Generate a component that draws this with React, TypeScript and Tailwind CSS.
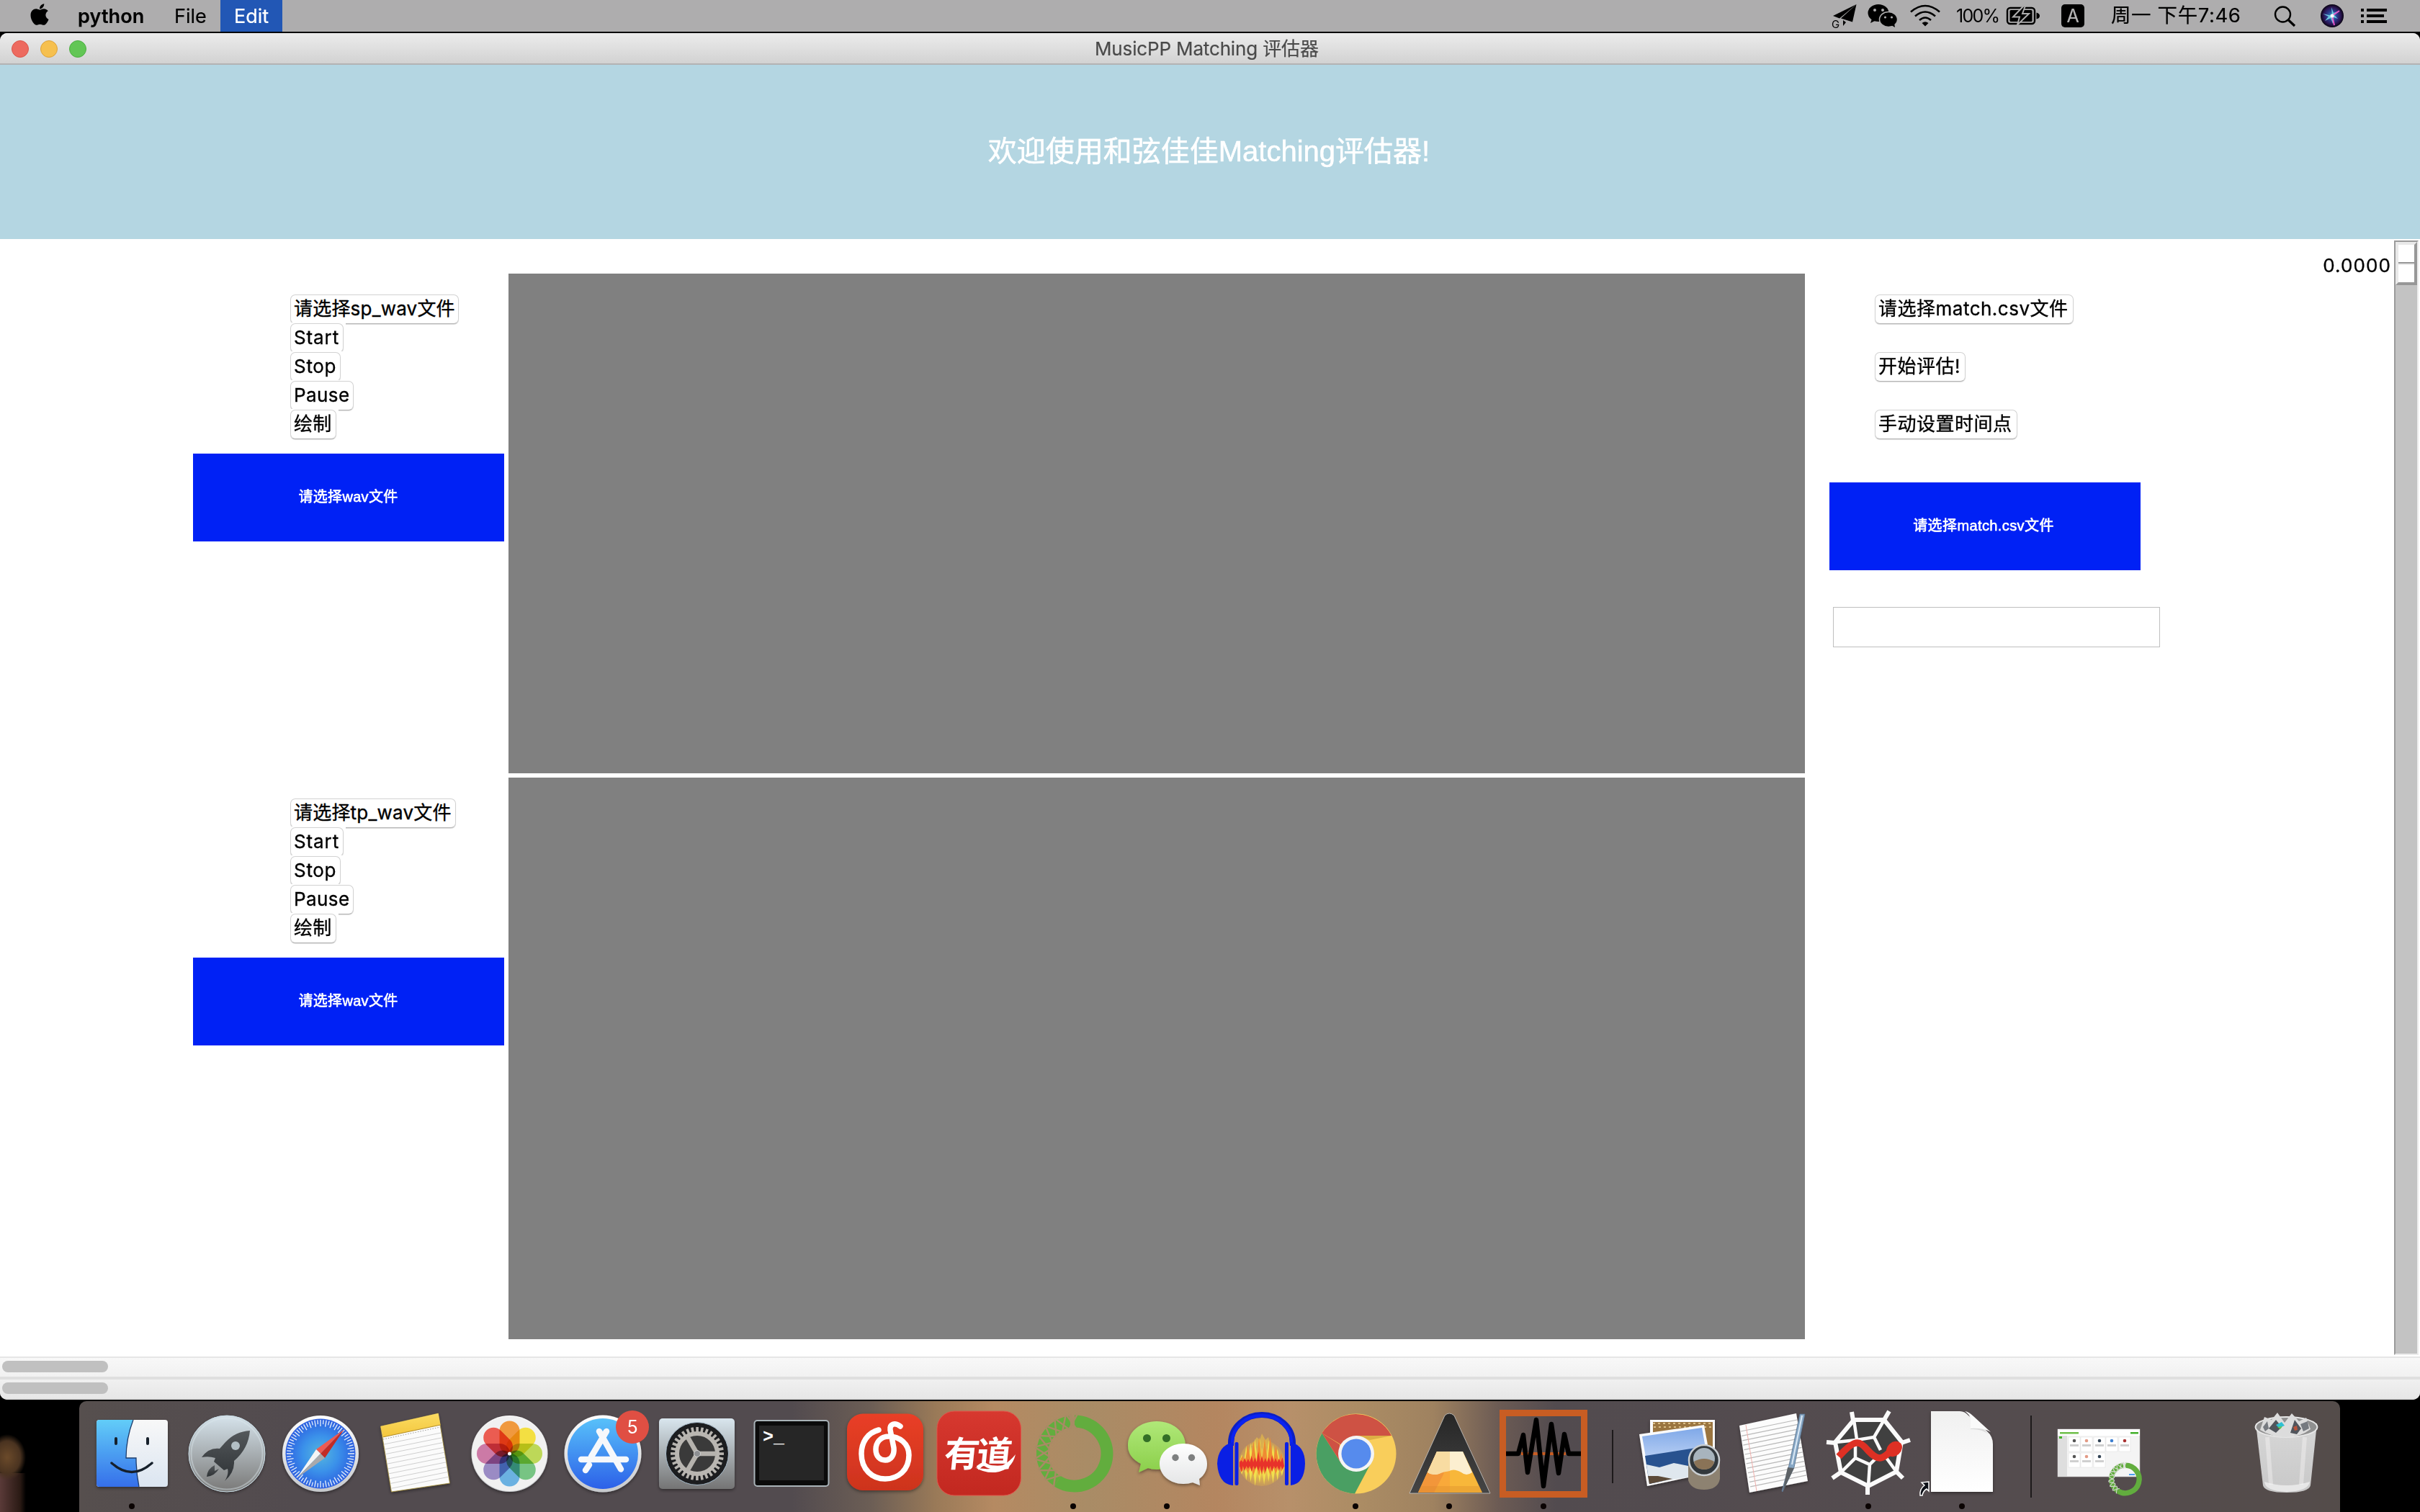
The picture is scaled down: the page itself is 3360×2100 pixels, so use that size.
import React from "react";
import { FaApple } from "react-icons/fa";

const UI = "font-['Inter','Noto_Sans_CJK_SC',sans-serif]";

/* ---------- menu bar ---------- */

function MenuBar() {
  return (
    <div className="flex h-11 shrink-0 items-center bg-[#aeadae] text-[28px] leading-none text-black whitespace-nowrap [-webkit-text-stroke:0.2px]">
      <div className="ml-[39px] w-[69px] shrink-0">
        <FaApple className="h-[34px] w-[32px] -translate-y-[2px]" />
      </div>
      <div className="w-[134px] shrink-0 text-[27px] font-semibold tracking-[0.1px]">python</div>
      <div className="w-[64px] shrink-0 text-[27px] tracking-[0px]">File</div>
      <div className="flex h-11 w-[86px] shrink-0 items-center justify-center bg-[#2257b5] text-[27px] text-white tracking-[0px]">
        Edit
      </div>
      <svg className="ml-auto h-11 w-[300px] shrink-0" viewBox="2540 0 300 44">
        <path d="M2577.5 6 2545 22l9 3.5z" />
        <path d="M2577.5 6 2556 25.500l16 5z" />
        <path d="M2559 28v8l4-5z" />
        <text x="2543" y="38.500" fontSize="15" fontFamily="Inter">G</text>
        <ellipse cx="2608" cy="18" rx="14.500" ry="12" />
        <path d="M2599 26l-2 6 8-4z" />
        <g stroke="#aeadae" strokeWidth="1.500">
          <ellipse cx="2622" cy="27" rx="12.500" ry="10.500" />
        </g>
        <path d="M2626 35l5 3-1-6z" />
        <g fill="#aeadae">
          <circle cx="2603" cy="14" r="2" />
          <circle cx="2614" cy="14" r="2" />
          <circle cx="2617.500" cy="24" r="1.600" />
          <circle cx="2626.500" cy="24" r="1.600" />
        </g>
        <g fill="none" stroke="#000" strokeWidth="2.600">
          <path d="M2653 16.500q20-17 40 0" />
          <path d="M2659 22.500q14-12 28 0" />
          <path d="M2665 28q8-7 16 0" />
        </g>
        <path d="M2668.500 32q4.500-3.500 9 0l-4.500 4.500z" />
        <text x="2716" y="31" fontSize="25" fontFamily="Inter" textLength="61">100%</text>
        <rect x="2787" y="11" width="38" height="22" rx="4" fill="none" stroke="#000" strokeWidth="2.400" />
        <rect x="2790.500" y="14" width="31" height="16" rx="1.500" />
        <path d="M2827.500 17.500q4.500 1 4.500 4.500t-4.500 4.500z" />
        <path d="M2810 8 2795 23.500h9l-3 11 16-15.500h-9l4-11z" stroke="#aeadae" strokeWidth="2" />
      </svg>
      <div className="ml-[22px] flex h-[32px] w-[32px] shrink-0 items-center justify-center rounded-[5px] bg-black text-[25px] text-[#b5b4b5]">
        A
      </div>
      <div className="ml-[37px] w-[226px] shrink-0 text-[27.500px] tracking-[0.6px]">周一 下午7:46</div>
      <svg className="h-11 w-[203px] shrink-0" viewBox="3157 0 203 44">
        <circle cx="3169.500" cy="20" r="10.500" fill="none" stroke="#000" strokeWidth="2.400" />
        <path d="M3177 27.500 3186 36" stroke="#000" strokeWidth="3.200" />
        <defs>
          <radialGradient id="siri">
            <stop offset="0" stopColor="#2fb6c9" />
            <stop offset=".4" stopColor="#2b3f93" />
            <stop offset=".75" stopColor="#2a1453" />
            <stop offset="1" stopColor="#070310" />
          </radialGradient>
        </defs>
        <circle cx="3238" cy="22" r="16" fill="url(#siri)" />
        <path d="M3238 22l-1-12 3 8 8-3-7 6 5 5-6-2-1 9-3-8-8 4 5-6-8-4z" fill="#6fc9e0" />
        <path d="M3238 22l3 13M3238 22l10-7" stroke="#e557c8" strokeWidth="2" />
        <circle cx="3238" cy="22" r="2.500" fill="#fff" />
        <g>
          <rect x="3278" y="12" width="4" height="4" />
          <rect x="3286" y="12" width="28" height="4" />
          <rect x="3278" y="20" width="4" height="4" />
          <rect x="3286" y="20" width="24" height="4" />
          <rect x="3278" y="28" width="4" height="4" />
          <rect x="3286" y="28" width="28" height="4" />
        </g>
      </svg>
    </div>
  );
}

/* ---------- window controls ---------- */

type Control = { label: string; size: string; spacing: string };

function Button({ label, size, spacing }: Control) {
  return (
    <button
      className={`flex h-[41px] items-center justify-start rounded-[7px] border border-[#d2d2d2] border-b-[#b4b4b4] bg-white pb-[2px] pl-[4px] text-[26px] leading-none whitespace-nowrap text-black shadow-[0_1px_1px_#dcdcdc] [-webkit-text-stroke:0.35px] ${size} ${spacing}`}
    >
      {label}
    </button>
  );
}

function StatusLabel({ text, spacing }: { text: string; spacing: string }) {
  return (
    <div
      className={`flex h-[122px] w-[432px] items-center justify-center bg-[#0021f5] pb-[3px] font-['Liberation_Sans','Noto_Sans_CJK_SC',sans-serif] text-[20px] leading-none text-white [-webkit-text-stroke:0.6px] ${spacing}`}
    >
      {text}
    </div>
  );
}

function TrackControls({ kind }: { kind: "sp" | "tp" }) {
  const rows: Control[] = [
    kind === "sp"
      ? { label: "请选择sp_wav文件", size: "w-[234px]", spacing: "tracking-[0.2px]" }
      : { label: "请选择tp_wav文件", size: "w-[230px]", spacing: "tracking-[0.2px]" },
    { label: "Start", size: "w-[74px]", spacing: "tracking-[0.9px]" },
    { label: "Stop", size: "w-[70px]", spacing: "tracking-[0.7px]" },
    { label: "Pause", size: "w-[88px]", spacing: "tracking-[0.4px]" },
    { label: "绘制", size: "w-[64px]", spacing: "tracking-[0.3px]" },
  ];
  return (
    <div className="flex h-[700px] flex-col">
      <div className="ml-[400px] flex flex-col items-start">
        {rows.map((r) => (
          <div key={r.label} className="relative h-10 bg-white px-[3px] pt-px">
            <Button {...r} />
          </div>
        ))}
      </div>
      <div className="mt-[22px] ml-[268px]">
        <StatusLabel text="请选择wav文件" spacing="pr-[1px] tracking-[0.3px]" />
      </div>
    </div>
  );
}

function MatchControls() {
  return (
    <div className="flex flex-col items-start pt-[77px] pl-[34px]">
      <div className="ml-[63px] flex flex-col items-start gap-[39px]">
        <Button label="请选择match.csv文件" size="w-[276px]" spacing="tracking-[0.5px]" />
        <Button label="开始评估!" size="w-[126px]" spacing="tracking-[0.5px]" />
        <Button label="手动设置时间点" size="w-[198px]" spacing="tracking-[0.5px]" />
      </div>
      <div className="mt-[60px]">
        <StatusLabel text="请选择match.csv文件" spacing="pr-[4px] tracking-[0.4px]" />
      </div>
      <input className="mt-[51px] ml-[5px] h-[56px] w-[454px] border border-[#bfbfbf] bg-white outline-none" />
    </div>
  );
}

function Scale() {
  return (
    <div className="mt-[2px] mr-[2px] flex h-[1548px] w-[34px] shrink-0 flex-col border-2 border-[#ececec] border-t-[#9a9a9a] border-l-[#9a9a9a] bg-[#c3c3c3]">
      <div className="flex h-[60px] flex-col border-4 border-[#979797] border-t-[#e9e9e9] border-l-[#e9e9e9] bg-white">
        <div className="h-[26px] border-b-2 border-[#979797]" />
        <div className="h-[2px] bg-[#e9e9e9]" />
      </div>
    </div>
  );
}

function ScrollTrack({ look }: { look: string }) {
  return (
    <div className={`flex ${look}`}>
      <div className="ml-[3px] h-4 w-[147px] rounded-full bg-[#c0c0c0]" />
    </div>
  );
}

function Window() {
  return (
    <div className="flex h-[1898px] shrink-0 flex-col overflow-hidden rounded-[10px] bg-white">
      <div className="flex h-[44px] shrink-0 items-center border-b-2 border-[#b3b3b3] bg-linear-to-b from-[#ececec] to-[#d2d2d2] pt-[2px]">
        <div className="ml-4 flex w-[1504px] gap-4">
          <span className="size-6 rounded-full border border-[#d9564b] bg-[#ed6a5f]" />
          <span className="size-6 rounded-full border border-[#dba23c] bg-[#f6c04f]" />
          <span className="size-6 rounded-full border border-[#4cae42] bg-[#62c655]" />
        </div>
        <div className="text-[26px] leading-none tracking-[-0.15px] whitespace-nowrap text-[#4a4a4a] [-webkit-text-stroke:0.2px]">
          MusicPP Matching 评估器
        </div>
      </div>
      <div className="flex h-[242px] shrink-0 items-center justify-center bg-[#b4d6e2] pr-[3px] pb-[3px] font-['Liberation_Sans','Noto_Sans_CJK_SC',sans-serif] text-[40px] leading-none text-white [-webkit-text-stroke:0.5px]">
        欢迎使用和弦佳佳Matching评估器!
      </div>
      <div className="flex h-[1552px] shrink-0">
        <div className="w-[706px] shrink-0 pt-[76px]">
          <TrackControls kind="sp" />
          <TrackControls kind="tp" />
        </div>
        <div className="flex w-[1800px] shrink-0 flex-col gap-[6px] pt-[48px]">
          <div className="h-[694px] bg-[#808080]" />
          <div className="h-[780px] bg-[#808080]" />
        </div>
        <MatchControls />
        <div className="mt-[17px] mr-[4px] ml-auto text-[26px] tracking-[1.1px] text-black [-webkit-text-stroke:0.35px]">0.0000</div>
        <Scale />
      </div>
      <ScrollTrack look="h-[28px] shrink-0 border-t-2 border-[#e6e6e6] bg-linear-to-b from-[#f8f8f8] to-[#f1f1f1] pt-[4px]" />
      <ScrollTrack look="h-[32px] shrink-0 border-t-4 border-b-2 border-[#dfdfdf] bg-linear-to-b from-[#f0f0f0] to-[#e7e7e7] pt-[4px]" />
    </div>
  );
}

/* ---------- dock ---------- */

function Slot({ children, running = false }: { children?: React.ReactNode; running?: boolean }) {
  return (
    <svg className="h-[154px] w-[130.670px] shrink-0 overflow-visible" viewBox="0 0 130.67 154">
      {children}
      {running && <circle cx="65" cy="146" r="4" fill="#0a0302" />}
    </svg>
  );
}

function Separator({ look }: { look: string }) {
  return <div className={`w-[2px] shrink-0 bg-[#1d1a1b] ${look}`} />;
}

const range = (n: number) => Array.from({ length: n }, (_, i) => i);

function Defs() {
  const linear: [string, string, string][] = [
    ["finderL", "#62cdf8", "#356fea"],
    ["finderR", "#f8f8f8", "#dbe5f1"],
    ["launch", "#d3e0e8", "#7c7c7b"],
    ["rocket", "#54585b", "#2e3235"],
    ["metal", "#d9e6ee", "#747474"],
    ["ring", "#fefefe", "#c6c9cc"],
    ["store", "#58c1fa", "#2c60e8"],
    ["notes", "#fbdc62", "#f3c63d"],
    ["netease", "#e93f26", "#cd331e"],
    ["youdao", "#d7382f", "#c22820"],
    ["wxg", "#b0e878", "#8bcf4b"],
    ["wxw", "#ffffff", "#e4e5e6"],
    ["sea", "#7fa8e8", "#b5cdf3"],
    ["can", "#dedede", "#cfcfcf"],
    ["blade", "#262626", "#454545"],
    ["page", "#f0f0f0", "#ffffff"],
  ];
  return (
    <svg className="absolute size-0">
      <defs>
        {linear.map(([id, a, b]) => (
          <linearGradient key={id} id={id} x1="0" y1="0" x2="0" y2="1">
            <stop offset="0" stopColor={a} />
            <stop offset="1" stopColor={b} />
          </linearGradient>
        ))}
        <radialGradient id="safari">
          <stop offset="0" stopColor="#55b6dd" />
          <stop offset=".5" stopColor="#3b92ea" />
          <stop offset="1" stopColor="#2c5fe0" />
        </radialGradient>
        <radialGradient id="flame">
          <stop offset=".5" stopColor="#e9c24c" />
          <stop offset="1" stopColor="#d9a94e" stopOpacity=".45" />
        </radialGradient>
        <filter id="drop" x="-20%" y="-20%" width="140%" height="140%">
          <feDropShadow dx="0" dy="2" stdDeviation="2" floodOpacity=".4" />
        </filter>
      </defs>
    </svg>
  );
}

function Finder() {
  return (
    <Slot running>
      <g filter="url(#drop)">
        <rect x="16" y="26" width="99" height="93" rx="4" fill="url(#finderR)" />
        <path d="M20 26h47q-10 26-10 53h14q0 20 4 40H20q-4 0-4-4V30q0-4 4-4z" fill="url(#finderL)" />
      </g>
      <path d="M67 26q-10 26-10 53h14q0 20 4 40" fill="none" stroke="#1d3c6b" strokeWidth="1.300" />
      <g stroke="#16202b" strokeLinecap="round" fill="none">
        <path d="M43 52v7M87 52v7" strokeWidth="4" />
        <path d="M37 86q28 25 56 0" strokeWidth="3.400" />
      </g>
    </Slot>
  );
}

function Launchpad() {
  return (
    <Slot>
      <circle cx="66" cy="73" r="53" fill="#dfeaf0" filter="url(#drop)" />
      <circle cx="66" cy="73" r="53" fill="url(#launch)" stroke="#c9dce5" strokeWidth="1" />
      <circle cx="66" cy="73" r="49.500" fill="url(#launch)" stroke="#dfeaf0" strokeOpacity=".4" strokeWidth="2" />
      <path
        d="M98 41q-20 1-34 16l-8 9q-15-2-25 12 10-2 19 1l-2 5 14 12 5-2q2 8-4 17 14-12 13-28 20-17 22-42z"
        fill="url(#rocket)"
      />
      <path d="M49 89q-10 5-11 16 11-1 17-11l-6 3z" fill="url(#rocket)" />
      <circle cx="78" cy="62" r="6" fill="#b3bfc5" />
    </Slot>
  );
}

function Safari() {
  return (
    <Slot>
      <circle cx="66" cy="73" r="53" fill="url(#ring)" filter="url(#drop)" />
      <circle cx="66" cy="73" r="48.500" fill="url(#safari)" />
      <g stroke="#e8f1fb" strokeWidth="1.300">
        {range(72).map((i) => (
          <path key={i} d={i % 2 ? "M66 26v6" : "M66 26v9"} transform={`rotate(${i * 5} 66 73)`} />
        ))}
      </g>
      <path d="M99 39 60 67l6 6z" fill="#ee5b52" />
      <path d="M99 39 72 79l-6-6z" fill="#c22b25" />
      <path d="M33 107 60 67l6 6z" fill="#f5f5f5" />
      <path d="M33 107 72 79l-6-6z" fill="#a9a9ab" />
    </Slot>
  );
}

function Notes() {
  return (
    <Slot>
      <g transform="translate(12.500 0)">
        <path d="M6 35 86 17l16 97-81 12z" fill="#fbfbfb" stroke="#a08a35" strokeWidth=".8" filter="url(#drop)" />
        <path d="M6 35 86 17l3 16L9 50z" fill="url(#notes)" />
        <path d="M9 50 89 33" stroke="#b58f27" strokeWidth="1.200" />
        <path d="M9.500 53 89 36" stroke="#999" strokeWidth="1" strokeDasharray="1.500 2" />
        <g stroke="#cfcfcf" strokeWidth="1">
          {range(10).map((i) => (
            <path key={i} d="M10.500 60 90 44" transform={`translate(${i * 1.15} ${i * 6.8})`} />
          ))}
        </g>
      </g>
    </Slot>
  );
}

function Photos() {
  const petals = ["#f0912f", "#f3dd33", "#b9d64b", "#6cc07a", "#60abe0", "#9282c0", "#c9709f", "#ea4f43"];
  return (
    <Slot>
      <circle cx="66.500" cy="73" r="53" fill="url(#ring)" filter="url(#drop)" />
      <circle cx="66.500" cy="73" r="52" fill="#f1f1f1" />
      <g className="isolate">
        {petals.map((c, i) => (
          <rect
            key={c}
            className="mix-blend-multiply"
            x="52.500"
            y="27.500"
            width="28"
            height="46"
            rx="14"
            fill={c}
            fillOpacity=".92"
            transform={`rotate(${i * 45} 66.500 73)`}
          />
        ))}
      </g>
      <circle cx="66.500" cy="73" r="2.500" fill="#fff" />
    </Slot>
  );
}

function AppStore() {
  return (
    <Slot>
      <circle cx="66" cy="73" r="53.500" fill="url(#ring)" filter="url(#drop)" />
      <circle cx="66" cy="73" r="49" fill="url(#store)" />
      <g stroke="#f6f8fb" strokeWidth="8.500" strokeLinecap="round">
        <path d="M71 42 50 77M61 42l30 52.500M47 88.500 42 96" />
        <path d="M36 81h62" />
      </g>
      <circle cx="107" cy="36" r="23" fill="#e04f43" />
      <text x="107" y="45" textAnchor="middle" fontSize="25" fontFamily="Inter" fill="#fff">5</text>
    </Slot>
  );
}

function Preferences() {
  return (
    <Slot>
      <rect x="13" y="24" width="105" height="98" rx="5" fill="url(#metal)" filter="url(#drop)" />
      <circle cx="66" cy="73" r="43.500" fill="#1c1d1f" stroke="#a9bccb" strokeWidth="1" />
      <g>
        {range(32).map((i) => (
          <rect key={i} x="64.300" y="36" width="3.600" height="9" fill="#b7b4af" transform={`rotate(${i * 11.25} 66 73)`} />
        ))}
      </g>
      <circle cx="66" cy="73" r="28" fill="#3a3a3a" stroke="#b9b6b1" strokeWidth="6" />
      <g stroke="#b5b2ad" strokeWidth="6.500">
        {[90, 210, 330].map((a) => (
          <path key={a} d="M66 73V46" transform={`rotate(${a} 66 73)`} />
        ))}
      </g>
      <circle cx="66" cy="73" r="4.500" fill="#8d8f92" stroke="#d3d3d3" strokeWidth="1" />
    </Slot>
  );
}

function TerminalIcon() {
  return (
    <Slot>
      <rect x="14.500" y="27" width="103" height="91" rx="4" fill="#0b0b0b" stroke="#a9b3b8" strokeWidth="2" />
      <rect x="21" y="34" width="90" height="76" fill="#262626" />
      <text x="26" y="57" fontFamily="Liberation Mono" fontWeight="bold" fontSize="25" fill="#fff">&gt;_</text>
    </Slot>
  );
}

function Netease() {
  return (
    <Slot>
      <rect x="13" y="17.500" width="106" height="106.500" rx="22" fill="url(#netease)" filter="url(#drop)" />
      <path
        d="M57 40C41 44 33 58 33 73c0 22 15 35 33 35s33-12 33-33c0-16-13-26-28-26-12 0-18 9-18 18 0 10 6 15 13 15 8 0 13-7 12-17l-5-25c-1-8 6-11 14-5"
        fill="none"
        stroke="#fff"
        strokeWidth="7.500"
        strokeLinecap="round"
        strokeLinejoin="round"
      />
    </Slot>
  );
}

function Youdao() {
  return (
    <Slot>
      <rect x="7" y="14" width="116.500" height="117" rx="24" fill="url(#youdao)" stroke="#e2544b" strokeWidth="1" />
      <text
        x="64"
        y="91"
        textAnchor="middle"
        fontFamily="Noto Sans CJK SC"
        fontWeight="700"
        fontSize="49"
        textLength="94"
        fill="#fff"
        transform="skewX(-6) translate(8 0)"
      >
        有道
      </text>
      <path d="M60 92q8 2 14 2 24 2 42-20-5 22-28 25-16 1-28-7z" fill="#fff" />
    </Slot>
  );
}

/* Point on a circle round (67, 73); degrees run clockwise from the top. */
const onRing = (r: number, deg: number) => {
  const a = (deg * Math.PI) / 180;
  return `${(67 + r * Math.sin(a)).toFixed(1)} ${(73 - r * Math.cos(a)).toFixed(1)}`;
};

function Ring({ gap }: { gap: string }) {
  return (
    <g fill="none">
      <path d={`M${onRing(45, 0)}A45 45 0 1 1 ${onRing(45, 212)}`} stroke="#62ad3e" strokeWidth="17" />
      <path d={`M${onRing(45, 212)}A45 45 0 0 1 ${onRing(45, 352)}`} stroke="#62ad3e" strokeWidth="16" />
      <g stroke={gap} strokeWidth="2.400">
        {range(9).map((i) => (
          <path
            key={i}
            d={`M${onRing(55, 212 + i * 17)}L${onRing(35, 228 + i * 17)}M${onRing(55, 228 + i * 17)}L${onRing(35, 212 + i * 17)}`}
          />
        ))}
      </g>
      <path d={`M${onRing(55, 353)}L${onRing(44, 357)}L${onRing(35, 350)}`} stroke={gap} strokeWidth="4" />
    </g>
  );
}

function WeChat() {
  return (
    <Slot running>
      <g filter="url(#drop)">
        <path d="M51 28c22 0 40 14 40 33.500S73 95 51 95q-7 0-12-2l-13 6 3-12Q11 78 11 61.500C11 42 29 28 51 28z" fill="url(#wxg)" />
        <path d="M88 59c19 0 33 12 33 28 0 9-4 16-11 21l1 9-10-4q-6 2-13 2c-18 0-33-12-33-28s15-28 33-28z" fill="url(#wxw)" />
      </g>
      <g fill="#336f27">
        <circle cx="37.500" cy="51.500" r="5.500" />
        <circle cx="64.500" cy="51.500" r="5.500" />
      </g>
      <g fill="#7e8080">
        <circle cx="77" cy="78.500" r="4.700" />
        <circle cx="99.500" cy="78.500" r="4.700" />
      </g>
    </Slot>
  );
}

/* Spiky band: peaks above and troughs below, alternating with a base line on each side. */
function spikes(peaks: number[], upper: number, lower: number, troughs: number[]) {
  const step = 62 / peaks.length;
  const top = peaks.map((y, i) => `${(35 + i * step).toFixed(1)} ${upper}L${(35 + (i + 0.5) * step).toFixed(1)} ${y}`);
  const bottom = troughs.map(
    (y, i) => `${(97 - i * step).toFixed(1)} ${lower}L${(97 - (i + 0.5) * step).toFixed(1)} ${y}`,
  );
  return `M${top.join("L")}L${bottom.join("L")}L35 ${lower}z`;
}

function Audacity() {
  return (
    <Slot>
      <ellipse cx="66" cy="86" rx="32" ry="32" fill="url(#flame)" />
      <path d="M50 62q6-6 9-12l4 4 3-9 5 9 4-4 4 14z" fill="#dfb44e" fillOpacity=".8" />
      <path
        d={spikes([74, 62, 58, 52, 50, 56, 54, 60, 66, 76], 84, 92, [104, 110, 114, 112, 116, 114, 118, 112, 110, 102])}
        fill="#f2e04c"
      />
      <path
        d={spikes([76, 60, 56, 50, 52, 50, 62, 72], 84, 91, [98, 101, 103, 102, 104, 103, 101, 98])}
        fill="#f08a33"
      />
      <path
        d={spikes(
          [82, 79, 80, 76, 78, 70, 76, 79, 78, 75, 79, 80, 78],
          85,
          90,
          [95, 97, 94, 98, 95, 99, 102, 97, 95, 98, 94, 97, 99],
        )}
        fill="#e8322a"
      />
      <path d="M23 62v-4a43 39 0 0 1 86 0v4" fill="none" stroke="#0b1fc4" strokeWidth="8" />
      <path d="M25 60v-3a41 37 0 0 1 82 0v3" fill="none" stroke="#0a22f2" strokeWidth="4.500" />
      <path d="M26 57Q5 62 4 87q2 28 21 30h1z" fill="#0a1fe4" />
      <path d="M106 57q20 5 20 30-1 28-20 30z" fill="#0a1fe4" />
      <rect x="28.500" y="57" width="5" height="60" rx="2" fill="#0a1fe4" />
      <rect x="98" y="57" width="5" height="60" rx="2" fill="#0a1fe4" />
    </Slot>
  );
}

function Chrome() {
  return (
    <Slot running>
      <circle cx="66" cy="73" r="55.500" fill="#f9ce5b" />
      <path d="M66 73 18.500 44.500A55.500 55.500 0 0 1 115 48H66z" fill="#ce5244" />
      <path d="M18.500 44.500 45 86l21 13-2 29.500A55.500 55.500 0 0 1 18.500 44.500z" fill="#4a9f63" />
      <path d="M86 87 64 128.500 58 96z" fill="#4a9f63" />
      <path d="M18.500 44.500 45 86l-2-26z" fill="#ce5244" />
      <path d="M66 48h49l-30 6z" fill="#c99b37" fillOpacity=".6" />
      <circle cx="66" cy="73" r="25" fill="#f4f4f4" />
      <circle cx="66" cy="73" r="20.500" fill="#568bed" />
    </Slot>
  );
}

function PencilApp() {
  return (
    <Slot running>
      <path d="M59 20q6-6 13 0l50 108H10z" fill="url(#blade)" stroke="#c9c9c9" strokeWidth=".8" />
      <path d="M48 70h36l27 57H22z" fill="#f8b73a" />
      <path d="M48 70h18v57H22z" fill="#f2963a" />
      <path d="M57 102l9-32v57H44z" fill="#f9a93a" />
      <path d="M48 70h36l13 29q-8 6-15 0-10-6-17-2-9 0-14 4-9 3-16-2z" fill="#fcefd0" />
      <path d="M48 70h18v27q-9 1-15 4-9 3-16-2z" fill="#f8dca2" />
      <path d="M26 118h81l4 9H22z" fill="#d98a2b" fillOpacity=".35" />
    </Slot>
  );
}

function Waveform() {
  return (
    <Slot running>
      <path d="M4 12h122v122H4zM13 21v104h104V21z" fill="#c85d23" fillRule="evenodd" />
      <path d="M34 73h62" stroke="#c85d23" strokeWidth="4" />
      <path
        d="M13 73h17l7-26 6 52 12-73 10 92 11-86 10 68 8-54 6 27h17"
        fill="none"
        stroke="#000"
        strokeWidth="6.500"
        strokeLinejoin="round"
      />
    </Slot>
  );
}

function Preview() {
  return (
    <Slot>
      <g filter="url(#drop)">
        <path d="M23 26h90v76H23z" fill="#fafafa" />
        <path d="M27 29h83v40H27z" fill="#9a7440" />
        <path d="M27 31h82M28 36h80" stroke="#d9bd85" strokeWidth="2" strokeDasharray="3 4" />
        <path d="M8 46 98 33l12 66-91 19z" fill="#fafafa" />
      </g>
      <path d="M12 49 95 37l5 28-83 13z" fill="url(#sea)" />
      <path d="M16 76 99 63l7 34-84 18z" fill="#28528f" />
      <path d="M18 88l18 4 20-6 20 4 18 4 4 8-76 12z" fill="#dfe7ee" />
      <path d="M20 104l14 0 20 4-32 7z" fill="#5c4a38" />
      <path d="M76 84v26q4 13 22 13 19 0 22-15V82z" fill="#8d8271" />
      <circle cx="98" cy="82" r="21" fill="#32383c" stroke="#c9ced2" strokeWidth="2.500" />
      <circle cx="98" cy="80" r="15" fill="#a8b4bd" />
      <path d="M84 84q14-8 28 0-2 11-14 11T84 84z" fill="#8a7357" />
    </Slot>
  );
}

function TextEdit() {
  return (
    <Slot>
      <path d="M17 34 96 17l16 94-81 16z" fill="#fcfcfc" filter="url(#drop)" />
      <g stroke="#b9b9b9" strokeWidth="1.200">
        {range(13).map((i) => (
          <path key={i} d="M19 42 97 26" transform={`translate(${i * 1.1} ${i * 6.4})`} />
        ))}
      </g>
      <path d="M26 33l15 92" stroke="#efb0ac" strokeWidth="1" />
      <path d="M101 18h7l-15 74-16 34-1-1 10-36z" fill="#86a6c4" stroke="#55708c" strokeWidth=".8" />
      <path d="M104 20 90 88" stroke="#dbe9f5" strokeWidth="2" />
      <path d="M84 92l9 1-16 33z" fill="#5d6266" />
    </Slot>
  );
}

function Spyder() {
  return (
    <Slot running>
      <path d="M45 26h42l26 30-8 43-40 19-39-19-8-42z" fill="#404040" />
      <g fill="none" stroke="#fafafa" strokeWidth="6">
        <path d="M45 26h42l24 30-7 42-39 20-38-19-8-42z" />
        <path d="M42 15l2 12M94 14l-7 12M7 57l12 1M123 54l-12 4M15 107l13-9M113 107l-9-9M64 130v-14" />
        <g strokeWidth="4.500">
          <path d="M45 26l4 27M87 26 73 50M20 57l29-3 24-4 9 18M27 99l20-20V56M65 118l2-30M104 98 88 76M47 79l20 9 12-12" />
        </g>
      </g>
      <path d="M24 77q18-20 26-19 6 0 15 11 12 13 20 9 6-3 12-10" fill="none" stroke="#de3024" strokeWidth="9.500" />
      <ellipse cx="101" cy="66.500" rx="12" ry="9.500" fill="#de3024" transform="rotate(-42 101 66.500)" />
    </Slot>
  );
}

function DocumentIcon() {
  return (
    <Slot running>
      <path d="M22 14h40q7 0 12 6l26 22q8 7 8 18v66H22z" fill="url(#page)" filter="url(#drop)" />
      <path d="M77 24v15q15-1 25 7L80 24z" fill="#dadada" />
      <path d="M77 24q-2-6-8-10 6 1 12 7l24 22q-10-6-28-5z" fill="#fafafa" />
      <path
        d="M7 131q-1-9 6-14l-4-4 10-1v13l-3-3q-5 3-6 9z"
        fill="#0c0f16"
        stroke="#fff"
        strokeWidth="1.500"
      />
    </Slot>
  );
}

function MinimizedWindow() {
  const cards: [number, number][] = [
    [25, 58], [42, 58], [60, 58], [77, 58], [95, 58], [25, 80], [42, 80], [60, 80],
  ];
  return (
    <Slot>
      <rect x="8" y="39" width="114" height="66" fill="#f4f4f4" stroke="#bdbdbd" strokeWidth=".6" />
      <rect x="8" y="39" width="114" height="9" fill="#fff" />
      <rect x="11" y="43" width="26" height="2.500" fill="#6fbf4a" />
      <rect x="109" y="43" width="11" height="2.500" fill="#43b02a" />
      <rect x="8" y="48" width="13" height="57" fill="#dedede" />
      <rect x="10" y="49" width="4" height="3" fill="#43b02a" />
      {cards.map(([x, y], i) => (
        <g key={i}>
          <rect x={x - 2} y={y - 8} width="16" height="20" fill="#fff" stroke="#ddd" strokeWidth=".5" />
          <circle cx={x + 6} cy={y - 3} r="2.300" fill={["#555", "#e39b86", "#345", "#3d7fd0", "#a33"][i % 5]} />
          <rect x={x} y={y + 2} width="12" height="3" fill="#cfcfcf" />
        </g>
      ))}
      <rect x="107" y="101" width="8" height="2" fill="#4a9ff0" />
      <g transform="translate(73 77) scale(.43)">
        <Ring gap="#d8ddd5" />
      </g>
    </Slot>
  );
}

function Trash() {
  return (
    <Slot>
      <path d="M24 31h85l-9 86q-2 10-33 10t-33-10z" fill="url(#can)" fillOpacity=".95" />
      <path d="M40 50l5 66M92 50l-5 66" stroke="#fff" strokeWidth="6" strokeOpacity=".35" />
      <path d="M36 112q30 10 63 0-2 13-32 14-30-1-31-14z" fill="#fff" fillOpacity=".55" />
      <ellipse cx="66.500" cy="36" rx="43" ry="14" fill="#909090" stroke="#e6e6e6" strokeWidth="2" />
      <path d="M30 40l6-18 10 4 8-10 10 14 10-13 10 11 10-5 6 16q-14 11-34 11T30 40z" fill="#dcdcdc" />
      <path d="M42 38l10-12 8 10-8 8zM72 44l6-18 9 12-6 8z" fill="#51555c" />
      <path d="M52 33l8-4 4 5-8 3z" fill="#2fc0d2" />
      <path d="M54 36l7-1-3 4z" fill="#62c554" />
      <path d="M86 32l10-4 2 10-8 4zM34 36l6-8 2 10-5 4z" fill="#767a80" />
      <path d="M76 36l5-2 1 6-4 1z" fill="#b9543b" />
    </Slot>
  );
}

function Dock() {
  return (
    <div className="flex h-[154px] shrink-0 bg-black">
      <div className="h-[154px] w-[110px] shrink-0 bg-[radial-gradient(ellipse_26px_32px_at_10px_78px,#6b4a2a_0%,#4a3320_70%,transparent_100%),linear-gradient(to_right,#5a3a38_0px,#2a1a14_28px,transparent_36px)] bg-[size:100%_100%,100%_60px] bg-no-repeat bg-[position:0_0,0_100px]" />
      <div className="flex w-[3139px] shrink-0 overflow-hidden rounded-t-[10px] bg-[linear-gradient(to_right,#564f4e_0px,#524b4f_300px,#524b4f_990px,#6c5e55_1100px,#9a7a58_1190px,#b58a62_1270px,#a98c66_1400px,#b48660_1580px,#b7906a_1680px,#ab8c64_1780px,#9f8260_1880px,#6c5b54_1970px,#524b4f_2050px,#544c4f_2600px,#544c4a_3139px)] pl-[8px]">
        <Finder />
        <Launchpad />
        <Safari />
        <Notes />
        <Photos />
        <AppStore />
        <Preferences />
        <TerminalIcon />
        <Netease />
        <Youdao />
        <Slot running>
          <Ring gap="#a98a66" />
        </Slot>
        <WeChat />
        <Audacity />
        <Chrome />
        <PencilApp />
        <Waveform />
        <Separator look="ml-[29px] mt-[40px] h-[74px]" />
        <div className="w-[28px] shrink-0" />
        <Preview />
        <TextEdit />
        <Spyder />
        <DocumentIcon />
        <Separator look="ml-[29px] mt-[20px] h-[114px]" />
        <div className="w-[28px] shrink-0" />
        <MinimizedWindow />
        <div className="w-[128px] shrink-0" />
        <Trash />
      </div>
    </div>
  );
}

export default function App() {
  return (
    <div className={`flex h-[2100px] w-[3360px] flex-col overflow-hidden bg-black ${UI}`}>
      <Defs />
      <MenuBar />
      <div className="h-[2px] shrink-0" />
      <Window />
      <div className="h-[2px] shrink-0" />
      <Dock />
    </div>
  );
}
